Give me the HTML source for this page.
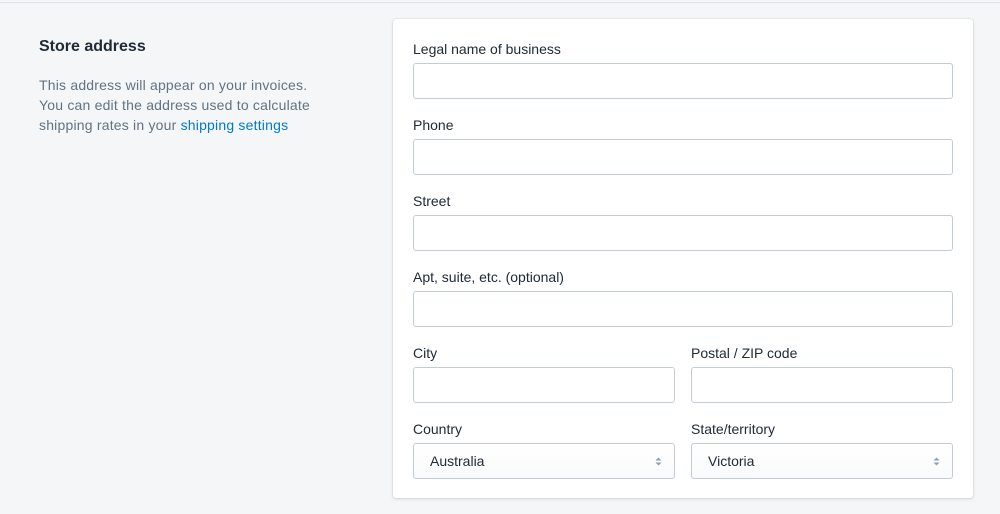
<!DOCTYPE html>
<html><head><style>
body{margin:0;width:1000px;height:514px;background:#f4f6f8;font-family:"Liberation Sans",sans-serif;position:relative;overflow:hidden;color:#212b36}
.top{position:absolute;left:0;top:2px;width:1000px;height:1px;background:#dfe3e8}
h2{position:absolute;left:39px;top:38px;margin:0;font-size:16px;font-weight:bold;color:#212b36}
.desc{position:absolute;left:39px;top:75px;font-size:14px;line-height:20px;color:#637381;width:285px;letter-spacing:0.2px}
.desc a{color:#007ace;text-decoration:none}
.card{position:absolute;left:393px;top:19px;width:580px;height:479px;background:#fff;border-radius:3px;box-shadow:0 0 0 1px rgba(63,63,68,.05),0 1px 3px rgba(63,63,68,.15)}
.lbl{position:absolute;font-size:14px;color:#212b36}
.in{position:absolute;height:34px;border:1px solid #c4cdd5;border-radius:3px;background:#fff;box-sizing:content-box}
.sel{background:linear-gradient(#fff,#f9fafb);font-size:14px;line-height:34px;padding-left:16px;box-sizing:border-box;height:36px}
.arr{position:absolute;right:12px;top:12px;width:7px;height:11px}
</style></head><body>
<div class="top"></div>
<h2>Store address</h2>
<div class="desc">This address will appear on your invoices. You can edit the address used to calculate shipping rates in your <a>shipping settings</a></div>
<div class="card"></div>
<div class="lbl" style="left:413px;top:41px">Legal name of business</div>
<div class="in" style="left:413px;top:63px;width:538px"></div>
<div class="lbl" style="left:413px;top:117px">Phone</div>
<div class="in" style="left:413px;top:139px;width:538px"></div>
<div class="lbl" style="left:413px;top:193px">Street</div>
<div class="in" style="left:413px;top:215px;width:538px"></div>
<div class="lbl" style="left:413px;top:269px">Apt, suite, etc. (optional)</div>
<div class="in" style="left:413px;top:291px;width:538px"></div>
<div class="lbl" style="left:413px;top:345px">City</div>
<div class="in" style="left:413px;top:367px;width:260px"></div>
<div class="lbl" style="left:691px;top:345px">Postal / ZIP code</div>
<div class="in" style="left:691px;top:367px;width:260px"></div>
<div class="lbl" style="left:413px;top:421px">Country</div>
<div class="in sel" style="left:413px;top:443px;width:262px">Australia<svg class="arr" viewBox="0 0 7 11"><path d="M0.5 4.5L3.5 1.5L6.5 4.5Z M0.5 6.5L3.5 9.5L6.5 6.5Z" fill="#919eab"/></svg></div>
<div class="lbl" style="left:691px;top:421px">State/territory</div>
<div class="in sel" style="left:691px;top:443px;width:262px">Victoria<svg class="arr" viewBox="0 0 7 11"><path d="M0.5 4.5L3.5 1.5L6.5 4.5Z M0.5 6.5L3.5 9.5L6.5 6.5Z" fill="#919eab"/></svg></div>
</body></html>
